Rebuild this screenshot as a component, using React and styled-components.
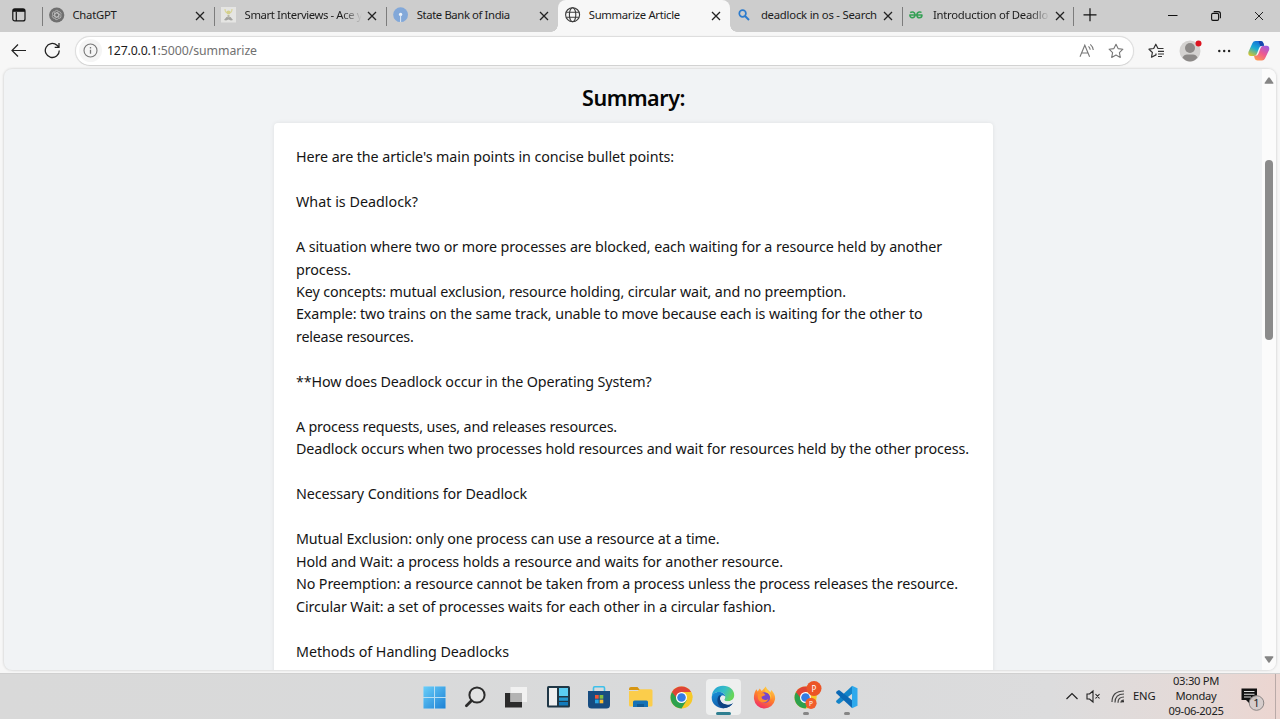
import React, { useLayoutEffect, useRef } from "react";
import styled, { createGlobalStyle } from "styled-components";

const GlobalStyle = createGlobalStyle`
  * { box-sizing: border-box; }
  html, body { margin: 0; padding: 0; overflow: hidden; }
  body { font-family: "Noto Sans", "Open Sans", sans-serif; color: #1b1b1b; }
  svg { display: block; flex: none; }
`;

const Screen = styled.div`
  width: 1280px;
  height: 719px;
  display: flex;
  flex-direction: column;
  overflow: hidden;
  background: #f7f7f7;
`;

const TextRun = styled.span`
  display: inline-block;
  white-space: pre;
`;

// Spreads the letters so that a run of text takes up a given width.
function Fit({ width, children }) {
  const ref = useRef(null);
  useLayoutEffect(() => {
    const el = ref.current;
    el.style.letterSpacing = "0px";
    const natural = el.getBoundingClientRect().width;
    el.style.letterSpacing = `${(width - natural) / children.length}px`;
  }, [width, children]);
  return <TextRun ref={ref}>{children}</TextRun>;
}

/* ---------- tab strip ---------- */

const TabStrip = styled.div`
  height: 32px;
  flex: none;
  display: flex;
  background: #cdcdcd;
`;

const TabActions = styled.div`
  width: 41.5px;
  flex: none;
  padding: 8px 0 0 12px;
`;

const Tab = styled.div`
  position: relative;
  width: 172.1px;
  flex: none;
  height: 32px;
  display: flex;
  align-items: center;
  padding: 0 0 2px 7px;
  font-size: 11.3px;
  color: #1c1c1c;
  background: ${(p) => (p.$active ? "#f7f7f7" : "transparent")};
  border-radius: 8px 8px 0 0;
  &::before {
    content: "";
    display: ${(p) => (p.$divider ? "block" : "none")};
    position: absolute;
    left: 0;
    top: 7px;
    width: 1px;
    height: 19px;
    background: #7c7c7c;
  }
`;

const TabCurve = styled.i`
  position: absolute;
  bottom: 0;
  ${(p) => (p.$side === "left" ? "left: -7px;" : "right: -7px;")}
  width: 7px;
  height: 7px;
  background: radial-gradient(circle at ${(p) => (p.$side === "left" ? "0 0" : "100% 0")}, #cdcdcd 6.5px, #f7f7f7 7px);
`;

const Favicon = styled.div`
  width: 24px;
  height: 16px;
  flex: none;
`;

const TabTitle = styled.div`
  width: 118px;
  flex: none;
  white-space: nowrap;
  line-height: 18px;
  ${(p) => p.$fade && "mask-image: linear-gradient(90deg, #000 82%, transparent 99%);"}
`;

const TabClose = styled.div`
  width: 18px;
  height: 16px;
  flex: none;
  display: grid;
  place-items: center;
  padding-top: 1px;
`;

const NewTab = styled.div`
  position: relative;
  width: 82px;
  padding: 8px 0 0 9px;
  &::before {
    content: "";
    position: absolute;
    left: -1px;
    top: 7px;
    width: 1px;
    height: 19px;
    background: #7c7c7c;
  }
`;

const WindowControls = styled.div`
  flex: 1;
  display: flex;
  justify-content: flex-end;
  padding-top: 1px;
`;

const WindowButton = styled.div`
  width: 43px;
  height: 30px;
  display: grid;
  place-items: center;
`;

const CloseIcon = ({ width = 1.3 }) => (
  <svg width="10" height="10" viewBox="0 0 10 10" stroke="#222" strokeWidth={width}>
    <path d="M1 1l8 8M9 1l-8 8" />
  </svg>
);

const ChatIcon = () => (
  <svg width="16" height="16" viewBox="0 0 16 16">
    <circle cx="7.7" cy="8" r="7.6" fill="#6f6f6f" />
    <g fill="none" stroke="#b9b9b9" strokeWidth=".8">
      {[0, 60, 120, 180, 240, 300].map((a) => (
        <path key={a} transform={`rotate(${a} 7.7 8)`} d="M5.7 9.1V5.3a2.1 2.1 0 0 1 3.8-1.1M5.7 6.8l2-1.1 2.9 1.6" />
      ))}
    </g>
  </svg>
);

const SmartIcon = () => (
  <svg width="16" height="16" viewBox="0 0 16 16">
    <rect width="15" height="15.5" fill="#e5e5e3" />
    <path d="M4 2q0 4 3.500 4Q11 6 11 2" fill="none" stroke="#d9d59a" strokeWidth="1.200" />
    <circle cx="7.500" cy="5.500" r="2" fill="#d4d08c" />
    <path d="M3 13l2.500-3h4l2.500 3-2 .5-2.500-1-2.500 1z" fill="#a4a4a1" />
    <path d="M6.500 8h2v3h-2z" fill="#b5b5a8" />
  </svg>
);

const BankIcon = () => (
  <svg width="16" height="16" viewBox="0 0 16 16">
    <circle cx="7.6" cy="7.7" r="7.4" fill="#82a8d9" />
    <circle cx="7.6" cy="7.4" r="1.7" fill="#eef4fb" />
    <path d="M7.1 8h1v7h-1z" fill="#dce8f6" />
  </svg>
);

const GlobeIcon = () => (
  <svg width="16" height="16" viewBox="0 0 16 16" fill="none" stroke="#3c3c3c" strokeWidth="1.1">
    <circle cx="7.6" cy="7.7" r="7" />
    <ellipse cx="7.6" cy="7.7" rx="3.2" ry="7" />
    <path d="M1.4 5.2h12.4M1.4 10.2h12.4" />
  </svg>
);

const BingIcon = () => (
  <svg width="16" height="16" viewBox="0 0 16 16" fill="none" stroke="#2c7bcd" strokeWidth="1.7">
    <circle cx="5.6" cy="6.5" r="3.3" />
    <path d="M8 9l4 4" strokeWidth="2" />
  </svg>
);

const GeeksIcon = () => (
  <svg width="16" height="16" viewBox="0 0 16 16" fill="none" stroke="#35a055" strokeWidth="1.5">
    <path d="M.3 8h13.2M1.2 5.7Q2.4 4.7 4 5q2 .6 2 2.8 0 3-2.800 3Q1.100 10.800.8 8M12.500 5.500q-1-.8-2.300-.5-2.300.5-2.300 2.900 0 2.900 2.500 2.900Q13 10.800 13 8" />
  </svg>
);

const tabs = [
  { title: "ChatGPT", width: 44, Icon: ChatIcon, divider: true },
  { title: "Smart Interviews - Ace y", width: 117.5, Icon: SmartIcon, divider: true, fade: true },
  { title: "State Bank of India", width: 93, Icon: BankIcon, divider: true },
  { title: "Summarize Article", width: 91, Icon: GlobeIcon, active: true },
  { title: "deadlock in os - Search", width: 116, Icon: BingIcon },
  { title: "Introduction of Deadlo", width: 115, Icon: GeeksIcon, divider: true, fade: true },
];

/* ---------- toolbar ---------- */

const Toolbar = styled.div`
  height: 37px;
  flex: none;
  display: flex;
  align-items: center;
  padding-left: 11px;
`;

const NavButton = styled.div`
  width: ${(p) => p.$width}px;
`;

const AddressBar = styled.div`
  width: 1059px;
  height: 30px;
  display: flex;
  align-items: center;
  border: 1px solid #dedede;
  border-bottom-color: #d2d2d2;
  border-radius: 15px;
  background: #fff;
  padding: 0 9px 0 3px;
  box-shadow: 0 0 1px #ddd;
`;

const SiteInfo = styled.div`
  width: 23px;
  height: 23px;
  border-radius: 50%;
  display: grid;
  place-items: center;
  background: #f5f5f5;
  margin-right: 5px;
`;

const Url = styled.div`
  flex: 1;
  display: flex;
  font-size: 12.3px;
  line-height: 20px;
  color: #707070;
`;

const Host = styled.span`
  color: #1b1b1b;
`;

const AddressAction = styled.div`
  width: ${(p) => p.$width || 16}px;
`;

const ToolbarActions = styled.div`
  display: flex;
  align-items: center;
  padding-left: 14px;
  gap: 14px;
`;

/* ---------- web page ---------- */

const PageFrame = styled.div`
  height: 601px;
  flex: none;
  margin: 0 4px;
  display: flex;
  background: #f1f3f5;
  border-radius: 8px;
  overflow: hidden;
  box-shadow: 0 0 2px 1px #dedede;
`;

const Page = styled.main`
  flex: 1;
  display: flex;
  flex-direction: column;
  align-items: center;
  padding: 12px 0 0 1px;
`;

const Heading = styled.h2`
  margin: 0 0 8px;
  font-size: 21.5px;
  font-weight: 600;
  line-height: 34px;
  color: #050505;
`;

const SummaryCard = styled.section`
  width: 719px;
  height: 700px;
  flex: none;
  padding: 23.2px 22px;
  background: #fff;
  border-radius: 4px;
  box-shadow: 0 0 4px rgba(0, 0, 0, 0.08);
`;

const Line = styled.div`
  height: 22.47px;
  line-height: 22.47px;
  font-size: 14.3px;
  color: #151515;
`;

const ScrollTrack = styled.div`
  width: 14px;
  display: flex;
  flex-direction: column;
  align-items: center;
  background: #fbfbfb;
  padding: 8px 0 7px;
`;

const Thumb = styled.div`
  width: 8px;
  height: 180px;
  margin: 76px 0 auto;
  border-radius: 4px;
  background: #8b8b8b;
`;

const lines = [
  ["Here are the article's main points in concise bullet points:", 378],
  null,
  ["What is Deadlock?", 122],
  null,
  ["A situation where two or more processes are blocked, each waiting for a resource held by another", 646],
  ["process.", 55],
  ["Key concepts: mutual exclusion, resource holding, circular wait, and no preemption.", 550],
  ["Example: two trains on the same track, unable to move because each is waiting for the other to", 626.5],
  ["release resources.", 117.5],
  null,
  ["**How does Deadlock occur in the Operating System?", 355.5],
  null,
  ["A process requests, uses, and releases resources.", 321],
  ["Deadlock occurs when two processes hold resources and wait for resources held by the other process.", 673],
  null,
  ["Necessary Conditions for Deadlock", 231],
  null,
  ["Mutual Exclusion: only one process can use a resource at a time.", 423.5],
  ["Hold and Wait: a process holds a resource and waits for another resource.", 487],
  ["No Preemption: a resource cannot be taken from a process unless the process releases the resource.", 662],
  ["Circular Wait: a set of processes waits for each other in a circular fashion.", 479.5],
  null,
  ["Methods of Handling Deadlocks", 213],
];

/* ---------- taskbar ---------- */

const Taskbar = styled.footer`
  height: 46px;
  margin-top: auto;
  flex: none;
  display: flex;
  align-items: flex-start;
  justify-content: space-between;
  padding-left: 413.5px;
  border-top: 1px solid #d0d0d0;
  background: linear-gradient(90deg, #d9d9d9 0, #d9dadb 60%, #dcdcdd 82%, #e4dad8 93%, #ecd5d0 100%);
`;

const Apps = styled.div`
  display: flex;
  padding-top: 5px;
`;

const AppButton = styled.div`
  position: relative;
  width: 41.3px;
  height: 36px;
  display: grid;
  place-items: center;
  &::before {
    content: "";
    display: ${(p) => (p.$current ? "block" : "none")};
    position: absolute;
    inset: 0 3px;
    border-radius: 4px;
    background: #eeefef;
  }
  &::after {
    content: "";
    display: ${(p) => (p.$mark ? "block" : "none")};
    position: absolute;
    bottom: 0;
    left: calc(50% - ${(p) => p.$mark / 2}px);
    width: ${(p) => p.$mark}px;
    height: 3px;
    border-radius: 2px;
    background: ${(p) => (p.$current ? "#2f7f91" : "#858585")};
  }
  svg { position: relative; overflow: visible; }
`;

const Tray = styled.div`
  height: 44px;
  display: flex;
  align-items: center;
  width: 214px;
`;

const Language = styled.div`
  width: 33px;
  font-size: 11.2px;
  line-height: 16px;
`;

const Clock = styled.div`
  width: 60px;
  display: flex;
  flex-direction: column;
  align-items: center;
  font-size: 11.2px;
  line-height: 15px;
  color: #222;
  padding-bottom: 1px;
`;

const Notifications = styled.div`
  width: 35px;
  height: 45px;
  margin-left: 15px;
  padding-top: 13px;
  border-right: 1px solid #b9aaa8;
`;

const StartIcon = () => (
  <svg width="23" height="23" viewBox="0 0 23 23">
    <defs>
      <linearGradient id="win" x2="1" y2="1">
        <stop stopColor="#6bd0fa" /><stop offset="1" stopColor="#1b7fd4" />
      </linearGradient>
      <mask id="panes">
        <path fill="#fff" d="M.5.5h10.5v10.500H.5zM12 .5h10.500v10.500H12zM.5 12h10.500v10.500H.5zM12 12h10.500v10.500H12z" />
      </mask>
    </defs>
    <rect x=".5" y=".5" width="22" height="22" fill="#b8def3" />
    <rect width="23" height="23" fill="url(#win)" mask="url(#panes)" />
  </svg>
);

const SearchIcon = () => (
  <svg width="22" height="22" viewBox="0 0 22 22" fill="none" stroke="#2c2c2c" strokeLinecap="round">
    <circle cx="13" cy="9" r="7.600" strokeWidth="2" fill="#e2e3e3" />
    <path d="M7.400 14.700l-5 5" strokeWidth="2.800" />
  </svg>
);

const TaskViewIcon = () => (
  <svg width="24" height="22" viewBox="0 0 24 22">
    <path d="M0 7h17v14.500H0z" fill="#2b2b2b" />
    <path d="M5.500 1h16.500v15H5.500z" fill="#f1f1f1" />
    <path d="M5.500 7H17v9H5.500z" fill="#b3b3b3" />
  </svg>
);

const WidgetsIcon = () => (
  <svg width="23" height="22" viewBox="0 0 23 22">
    <rect width="23" height="21.500" rx="1.500" fill="#203746" />
    <path d="M2 2h8v17.500H2z" fill="#efefef" />
    <path d="M12 2h9v8h-9z" fill="#5bcdf2" />
    <path d="M12 11.500h9v3.300h-9z" fill="#2397cf" />
    <path d="M12 16h9v3.500h-9z" fill="#137bbb" />
  </svg>
);

const StoreIcon = () => (
  <svg width="22" height="23" viewBox="0 0 22 23">
    <path d="M5.500 6V2q0-1.200 1.200-1.200h8.600q1.200 0 1.200 1.200v4" fill="none" stroke="#3ec0ea" strokeWidth="1.600" />
    <path d="M0 5h22v14q0 3.500-3.500 3.500h-15Q0 22.500 0 19z" fill="#174c80" />
    <path d="M7 9h3.700v3.700H7z" fill="#ef5535" /><path d="M11.600 9h3.700v3.700h-3.700z" fill="#82bd40" />
    <path d="M7 13.600h3.700v3.700H7z" fill="#29a7e4" /><path d="M11.600 13.600h3.700v3.700h-3.700z" fill="#f8bc31" />
  </svg>
);

const FolderIcon = () => (
  <svg width="24" height="21" viewBox="0 0 24 21">
    <path d="M0 2Q0 0 2 0h6.500L11 3H0z" fill="#d79612" />
    <path d="M0 4h8.500L11 2.200h11q1.500 0 1.500 1.500V18q0 1.500-1.500 1.500H1.500Q0 19.500 0 18z" fill="#fbcd4b" />
    <path d="M4 20v-5q0-1.500 1.500-1.500h12q1.500 0 1.500 1.500v5z" fill="#1672b6" />
    <path d="M8 20v-3h7v3z" fill="#115a94" />
  </svg>
);

const ChromeShapes = () => (
  <>
    <circle cx="11.500" cy="11.500" r="11" fill="#f6c928" />
    <path d="M11.500 11.500L2 6A11 11 0 0 0 11.500 22.500l5.200-8.300z" fill="#2da14e" />
    <path d="M11.500 11.500H6.200L2 6a11 11 0 0 1 19.100 0z" fill="#df4436" />
    <path d="M11.500 6h9.600q1.400 2.600 1.400 5.500H11.500z" fill="#f6c928" />
    <circle cx="11.500" cy="11.500" r="5.500" fill="#fff" />
    <circle cx="11.500" cy="11.500" r="4.300" fill="#347ce4" />
  </>
);

const ChromeIcon = () => (
  <svg width="23" height="23" viewBox="0 0 23 23"><ChromeShapes /></svg>
);

const Initial = styled.text`
  font: ${(p) => p.$size}px "Noto Sans", sans-serif;
  fill: #fff;
  text-anchor: middle;
`;

const ChromeProfileIcon = () => (
  <svg width="23" height="23" viewBox="0 0 23 23">
    <ChromeShapes />
    <circle cx="20" cy="2.500" r="7.500" fill="#ec5527" />
    <Initial $size={8} x="20" y="5.500">P</Initial>
    <circle cx="17" cy="17.300" r="5.600" fill="#f15d2b" />
    <Initial $size={6.500} x="17" y="19.700">P</Initial>
  </svg>
);

const EdgeIcon = () => (
  <svg width="24" height="24" viewBox="0 0 24 24">
    <defs>
      <linearGradient id="edgeTop" x2="1" y2=".4"><stop stopColor="#229ed8" /><stop offset=".6" stopColor="#37bfc5" /><stop offset="1" stopColor="#67d65b" /></linearGradient>
      <linearGradient id="edgeLow" x2=".7" y2="1"><stop stopColor="#1693db" /><stop offset="1" stopColor="#1451a0" /></linearGradient>
    </defs>
    <path d="M.8 11C1.500 4.800 6 .8 12 .8c6.500 0 11.200 4.200 11.200 9.200 0 4-2.800 6.300-6.300 6.300-2.700 0-4-.9-3.700-1.800.3-.7 1-1.300 1-2.700C14.200 8.900 11.300 7 8 7c-3.200 0-5.800 1.500-7.200 4z" fill="url(#edgeTop)" />
    <path d="M.7 12.500C.8 9 4 6.900 7.800 6.900c3.600 0 6.400 2 6.400 5-1-1.600-4.200-1.500-5 1-1 3.700 2.600 8 8 7 2-.3 3.800-1.200 5-2.100-2 3.600-6 5.600-10.200 5.400C5.500 22.900.6 18.500.7 12.500z" fill="url(#edgeLow)" />
    <path d="M8.200 10.200C4.700 14 6.500 21 12 23.200c4.300.1 8-2 10.200-5.400-4.800 3.200-11.500 1.900-13-3.200-.4-1.500-.2-3 .9-4.200z" fill="#0d4383" />
    <path d="M14.200 11.900c0 1.400-.7 2-1 2.700-.3.900 1 1.800 3.700 1.800 1.800 0 3.500-.6 4.700-1.800l.5 3.300c-3 2-8.200 2.200-10.800-.4-2.300-2.400-2.500-5.300-1.100-6.500 1.300-1 3.400-.4 4 .9z" fill="#e9eeef" />
  </svg>
);

const FirefoxIcon = () => (
  <svg width="23" height="23" viewBox="0 0 23 23">
    <defs>
      <linearGradient id="fox" x1=".8" y1="0" x2=".3" y2="1"><stop stopColor="#ffd84a" /><stop offset=".5" stopColor="#ff812b" /><stop offset="1" stopColor="#f02c67" /></linearGradient>
    </defs>
    <path d="M3.500 3.200l1.200 2.300 2-3L8.800 5l4-4.500c.5 3 3.500 3.800 4.500 6l1-2.500c3 3 4.200 6 3.700 9.500A10.600 10.600 0 0 1 1 13C.6 9.500 1.500 6 3.500 3.200z" fill="url(#fox)" />
    <circle cx="11.800" cy="11.500" r="5.300" fill="#7446cf" />
    <path d="M4.500 7.500l6-.5 2 2-4 1.700c0 3 4.500 4.800 7 1.800-1 5-8.500 5.500-10.500.3z" fill="#ff8e2c" />
    <path d="M12.800.5C13.300 5.300 20 7 18 13.500c-.6-4-2-6.300-5.600-7.500-.7-2 0-4.300.4-5.500z" fill="#ffc83b" />
  </svg>
);

const CodeIcon = () => (
  <svg width="24" height="24" viewBox="0 0 24 24">
    <path d="M17 1L1.500 15.500 1 17l2.200 1.800 1.300-.1L18 8z" fill="#1384c9" />
    <path d="M17 23L1.500 8.500 1 7l2.200-1.800 1.300.1L18 16z" fill="#0b69b5" />
    <path d="M17 .7l5.500 2.500v17.600L17 23.300z" fill="#2ea9ec" />
  </svg>
);

const apps = [
  { Icon: StartIcon }, { Icon: SearchIcon }, { Icon: TaskViewIcon }, { Icon: WidgetsIcon },
  { Icon: StoreIcon }, { Icon: FolderIcon }, { Icon: ChromeIcon },
  { Icon: EdgeIcon, current: true, mark: 15 }, { Icon: FirefoxIcon },
  { Icon: ChromeProfileIcon, mark: 6 }, { Icon: CodeIcon, mark: 6 },
];

const star = "M8 1.200l2.100 4.400 4.800.6-3.500 3.400.9 4.800L8 12.100l-4.300 2.300.9-4.800L1.100 6.200l4.800-.6z";

export default function App() {
  return (
    <Screen>
      <GlobalStyle />
      <TabStrip>
        <TabActions>
          <svg width="14" height="14" viewBox="0 0 14 14" fill="none" stroke="#151515" strokeWidth="1.200">
            <rect x=".8" y=".9" width="12.200" height="12" rx="2" />
            <path d="M1 2.400h12" strokeWidth="2.800" /><path d="M4.300 4v9" />
          </svg>
        </TabActions>
        {tabs.map(({ title, width, Icon, active, divider, fade }) => (
          <Tab key={title} $active={active} $divider={divider}>
            {active && <><TabCurve $side="left" /><TabCurve $side="right" /></>}
            <Favicon><Icon /></Favicon>
            <TabTitle $fade={fade}><Fit width={width}>{title}</Fit></TabTitle>
            <TabClose><CloseIcon /></TabClose>
          </Tab>
        ))}
        <NewTab>
          <svg width="14" height="14" viewBox="0 0 14 14" stroke="#111" strokeWidth="1.200"><path d="M7 .3v13M.5 6.800h13" /></svg>
        </NewTab>
        <WindowControls>
          <WindowButton><svg width="10" height="10" viewBox="0 0 10 10" stroke="#111"><path d="M0 4.500h9.500" /></svg></WindowButton>
          <WindowButton>
            <svg width="10" height="10" viewBox="0 0 10 10" fill="none" stroke="#111" strokeWidth="1.100">
              <rect x=".6" y="2.400" width="7" height="7" rx="1.300" /><path d="M2.700.6h4.500q2.200 0 2.200 2.200v4.500" />
            </svg>
          </WindowButton>
          <WindowButton><CloseIcon width={1} /></WindowButton>
        </WindowControls>
      </TabStrip>

      <Toolbar>
        <NavButton $width={33}>
          <svg width="16" height="14" viewBox="0 0 16 14" fill="none" stroke="#222" strokeWidth="1.200"><path d="M15 6.500H1M7 .5l-6 6 6 6" /></svg>
        </NavButton>
        <NavButton $width={31}>
          <svg width="17" height="17" viewBox="0 0 17 17" fill="none" stroke="#222" strokeWidth="1.300">
            <path d="M15.300 8.500A7 7 0 1 1 13 3.300l1.700 1.600M15 1v4.300h-4.300" />
          </svg>
        </NavButton>
        <AddressBar>
          <SiteInfo>
            <svg width="15" height="15" viewBox="0 0 15 15" fill="none" stroke="#777" strokeWidth="1.100">
              <circle cx="7.500" cy="7.500" r="6.500" /><path d="M7.500 6.700v4M7.500 4v1.400" strokeWidth="1.300" />
            </svg>
          </SiteInfo>
          <Url><Host><Fit width={50.5}>127.0.0.1</Fit></Host><Fit width={99.5}>:5000/summarize</Fit></Url>
          <AddressAction $width={29}>
            <svg width="17" height="16" viewBox="0 0 17 16" fill="none" stroke="#777" strokeWidth="1.100">
              <path d="M1 13.800L5.800 2.300l4.800 11.500M2.700 10h6.200M9.500 3.300q1.600 1.500 1.700 3.500M11.300 1.300q2.600 2.200 3 5.700" />
            </svg>
          </AddressAction>
          <AddressAction>
            <svg width="16" height="16" viewBox="0 0 16 16" fill="none" stroke="#777" strokeWidth="1.100" strokeLinejoin="round"><path d={star} /></svg>
          </AddressAction>
        </AddressBar>
        <ToolbarActions>
          <svg width="17" height="16" viewBox="0 0 17 16" fill="none" stroke="#333" strokeWidth="1.200" strokeLinejoin="round">
            <path d="M8 10.500v1.400L3.500 14.200l.9-4.700L1 6.200l4.700-.7L7.800 1.200l2.200 4.300h5.500M10 8.300h6M10 11h6M10 13.500h4" />
          </svg>
          <svg width="24" height="24" viewBox="0 0 24 24">
            <circle cx="11" cy="12" r="10.500" fill="#d4d2d0" />
            <circle cx="11" cy="9" r="5" fill="#8c8987" />
            <path d="M3.500 18.500Q5 15.500 8 15.500h6q3 0 4.500 3-3 4-7.500 4t-7.500-4z" fill="#8c8987" />
            <circle cx="19.500" cy="4.500" r="3" fill="#dd1420" />
          </svg>
          <svg width="16" height="4" viewBox="0 0 16 4" fill="#222">
            <circle cx="2.300" cy="2" r="1.200" /><circle cx="7.200" cy="2" r="1.200" /><circle cx="12.100" cy="2" r="1.200" />
          </svg>
          <svg width="24" height="22" viewBox="0 0 24 22">
            <defs>
              <linearGradient id="copA" x1=".7" y1="0" x2=".2" y2="1"><stop stopColor="#1669d7" /><stop offset=".5" stopColor="#1badd3" /><stop offset="1" stopColor="#d6c52d" /></linearGradient>
              <linearGradient id="copB" x1=".8" y1="0" x2=".2" y2="1"><stop stopColor="#a05ae0" /><stop offset=".5" stopColor="#ee5a8f" /><stop offset="1" stopColor="#ff9850" /></linearGradient>
            </defs>
            <path d="M5.500 3Q6.300 1 8.500 1h5q2.200 0 2.800 2l.8 2.700h-2q-2.200 0-3 2.300L10 13.500Q9.200 16 7 16H4Q.8 16 1.400 12z" fill="url(#copA)" />
            <path d="M18 18.500q-.8 2-3 2h-4.500q-2.200 0-2.800-2L7 15.800h1.500q2.200 0 3-2.300L13.600 8q.8-2.300 3-2.300h3q3.200 0 2.600 4z" fill="url(#copB)" />
            <path d="M13.500 1q2.200 0 2.800 2l.8 2.700h-2q-1 0-1.700.6L11.500 1z" fill="#1745ac" />
          </svg>
        </ToolbarActions>
      </Toolbar>

      <PageFrame>
        <Page>
          <Heading><Fit width={103}>Summary:</Fit></Heading>
          <SummaryCard>
            {lines.map((line, i) => (
              <Line key={i}>{line && <Fit width={line[1]}>{line[0]}</Fit>}</Line>
            ))}
          </SummaryCard>
        </Page>
        <ScrollTrack>
          <svg width="10" height="7" viewBox="0 0 10 7" fill="#858585"><path d="M4.200.7q.8-1 1.600 0l3.500 5q.5 1-.8 1h-7q-1.300 0-.8-1z" /></svg>
          <Thumb />
          <svg width="10" height="7" viewBox="0 0 10 7" fill="#858585"><path d="M4.200 6.300q.8 1 1.600 0l3.500-5q.5-1-.8-1h-7q-1.300 0-.8 1z" /></svg>
        </ScrollTrack>
      </PageFrame>

      <Taskbar>
        <Apps>
          {apps.map(({ Icon, current, mark }, i) => (
            <AppButton key={i} $current={current} $mark={mark}><Icon /></AppButton>
          ))}
        </Apps>
        <Tray>
          <svg width="20" height="16" viewBox="0 0 20 16" fill="none" stroke="#222" strokeWidth="1.200"><path d="M.5 11L6 5.500 11.500 11" /></svg>
          <svg width="25" height="16" viewBox="0 0 25 16" fill="none" stroke="#222" strokeWidth="1.100"><path d="M1 6h2.500L7 3v11l-3.500-3H1zM9.500 6l4 4.500M13.500 6l-4 4.500" /></svg>
          <svg width="22" height="16" viewBox="0 0 22 16" fill="none" stroke="#444" strokeWidth="1.200">
            <path d="M1 14Q1 3 13 3M4 14.500Q4 6 13 6M7 14.700Q7 9 13 9M10 14.700Q10 12 13 12" /><circle cx="12" cy="13.500" r="1" fill="#222" stroke="none" />
          </svg>
          <Language><Fit width={22.5}>ENG</Fit></Language>
          <Clock>
            <Fit width={46}>03:30 PM</Fit>
            <Fit width={41}>Monday</Fit>
            <Fit width={55}>09-06-2025</Fit>
          </Clock>
          <Notifications>
            <svg width="25" height="26" viewBox="0 0 25 26">
              <path d="M.5 1.500h15.500V13H9v4l-4-4H.5z" fill="#111" />
              <path d="M3 4.500h10.500M3 7.200h10.500M3 10h7" stroke="#ddd" strokeWidth="1.100" />
              <circle cx="15.500" cy="16" r="7.300" fill="#d4cccb" fillOpacity=".92" stroke="#8a8584" />
              <text x="15.500" y="20" fontSize="11" textAnchor="middle" fill="#222">1</text>
            </svg>
          </Notifications>
        </Tray>
      </Taskbar>
    </Screen>
  );
}
